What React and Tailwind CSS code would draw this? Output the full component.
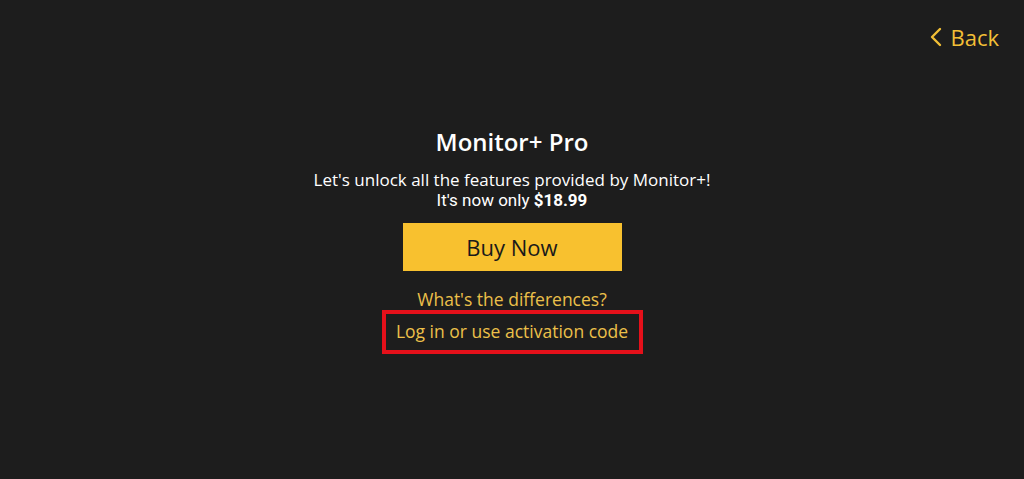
import React from 'react';

const sans = { fontFamily: '"Open Sans", "Noto Sans", sans-serif' };

const BackButton = () => (
    <button className="flex items-center gap-[8px] text-[#f2bf36] text-[22px] leading-none" style={sans}>
        <svg width="12" height="20" viewBox="0 0 12 20" fill="none" stroke="currentColor" strokeWidth="2.4" strokeLinecap="round" strokeLinejoin="round">
            <path d="M10 2 L2 10 L10 18" />
        </svg>
        Back
    </button>
);

const App = () => {
    return (
        <div className="w-[1024px] h-[479px] bg-[#1d1d1d] flex flex-col" style={sans}>
            <div className="flex justify-end pt-[26px] pr-[25px]">
                <BackButton />
            </div>

            <div className="flex flex-col items-center pt-[82px]">
                <h1 className="text-white text-[24px] font-semibold leading-none">Monitor+ Pro</h1>

                <div className="mt-[16px] text-white text-[17px] leading-[20px] text-center">
                    <p>Let's unlock all the features provided by Monitor+!</p>
                    <p style={{ fontFamily: 'Roboto, sans-serif' }}>
                        It's now only <span className="font-bold">$18.99</span>
                    </p>
                </div>

                <button className="mt-[13px] w-[219px] h-[48px] bg-[#f8c12f] text-[#1a1a1a] text-[22px]">
                    Buy Now
                </button>

                <a className="mt-[20px] text-[#ecc04a] text-[17.5px] leading-none">What's the differences?</a>

                <div className="mt-[1px] w-[261px] h-[44px] border-[4px] border-[#e5101a] flex items-center justify-center">
                    <a className="text-[#ecc04a] text-[17.5px] leading-none">Log in or use activation code</a>
                </div>
            </div>
        </div>
    );
};

export default App;
